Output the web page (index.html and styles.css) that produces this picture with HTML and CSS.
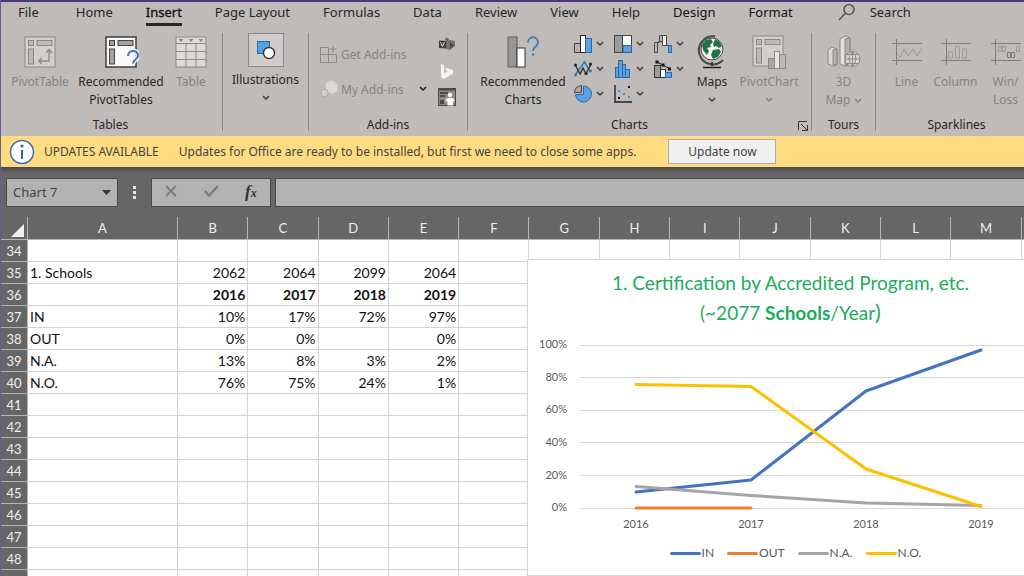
FILE: index.html
```html
<!DOCTYPE html>
<html lang="en">
<head>
<meta charset="utf-8">
<title>Workbook - Schools</title>
<link rel="stylesheet" href="styles.css">
</head>
<body>
<svg class="defs" aria-hidden="true">
  <symbol id="chev" viewBox="0 0 8 6"><path d="M1 1.2L4 4L7 1.2" fill="none" stroke="currentColor" stroke-width="1.6"/></symbol>
</svg>
<div class="app">
<header class="ribbon">
  <nav class="tabs">
    <button class="tab tab-file">File</button>
    <button class="tab">Home</button>
    <button class="tab active">Insert</button>
    <button class="tab">Page Layout</button>
    <button class="tab">Formulas</button>
    <button class="tab">Data</button>
    <button class="tab">Review</button>
    <button class="tab">View</button>
    <button class="tab">Help</button>
    <button class="tab context">Design</button>
    <button class="tab context">Format</button>
    <button class="tab search"><svg width="18" height="18" viewBox="0 0 18 18" fill="none" stroke="#555" stroke-width="1.6"><circle cx="11" cy="6.500" r="5"/><path d="M7.500 10L1 17"/></svg>Search</button>
  </nav>
  <div class="groups">
    <section class="group g-tables">
      <div class="body">
        <button class="big off w70">
          <svg width="32" height="32" viewBox="0 0 32 32"><rect x="1" y="1" width="30" height="30" fill="#d2d0ce" stroke="#8a8886"/><g fill="#bcb9b7" stroke="#8a8886"><rect x="4.500" y="4.500" width="5" height="5"/><rect x="13" y="4.500" width="15" height="5"/><rect x="4.500" y="13" width="5" height="15"/></g><path d="M25 13.500V25H15M22 17l3-3.500 3 3.500M18 22l-3.500 3 3.500 3" fill="none" stroke="#8a8886" stroke-width="1.300"/></svg>
          <span>PivotTable</span>
        </button>
        <button class="big w92">
          <svg width="36" height="32" viewBox="-2 0 36 32"><rect x="1" y="1" width="30" height="30" fill="#f8f8f8" stroke="#333" stroke-width="1.400"/><g fill="#a3a19f" stroke="#444"><rect x="4.500" y="4.500" width="5" height="5"/><rect x="13" y="4.500" width="15" height="5"/><rect x="4.500" y="13" width="5" height="15"/></g><path d="M23 20c0-6.500 10-6.500 10-.500 0 4.500-5 4-5 8" fill="none" stroke="#f8f8f8" stroke-width="5"/><path d="M23 20c0-6.500 10-6.500 10-.500 0 4.500-5 4-5 8" fill="none" stroke="#3a77bd" stroke-width="2"/><circle cx="28" cy="31" r="1.300" fill="#3a77bd"/></svg>
          <span>Recommended<br>PivotTables</span>
        </button>
        <button class="big off w48">
          <svg width="32" height="32" viewBox="0 0 32 32"><rect x="1" y="1" width="30" height="30" fill="#dddbda" stroke="#8a8886"/><path d="M1 7.500H31M1 15.500H31M1 23.500H31M11 7.500V31M21 7.500V31" stroke="#8a8886"/><path d="M3.500 3h5L6 6zM13.500 3h5L16 6zM23.500 3h5L26 6z" fill="#8a8886"/></svg>
          <span>Table</span>
        </button>
      </div>
      <h2>Tables</h2>
    </section>
    <section class="group g-ill">
      <div class="body center">
        <button class="big ill">
          <span class="frame"><svg width="20" height="20" viewBox="0 0 20 20"><rect x="1.500" y="1.500" width="12" height="12" fill="#55a0e0" stroke="#2a6cb0"/><circle cx="13" cy="13" r="5.500" fill="#fff" stroke="#333" stroke-width="1.400"/></svg></span>
          <span>Illustrations</span><svg class="chev" width="8" height="6"><use href="#chev"/></svg>
        </button>
      </div>
    </section>
    <section class="group g-add">
      <div class="body">
        <div class="addins">
          <button class="line off"><svg width="18" height="18" viewBox="0 0 18 18" fill="none" stroke="#8a8886"><path d="M.500 2.500H8.500V17.500H.500zM.500 9.500H16.500V17.500H8.500M13 .500v7M9.500 4h7"/></svg>Get Add-ins</button>
          <button class="line off"><svg width="18" height="18" viewBox="0 0 18 18"><path d="M7 2l6-1.500 4.500 4v6L13 14l-6-2L5.500 6z" fill="#dbd9d8"/><circle cx="4.500" cy="13" r="3.700" fill="#d3d1d0" stroke="#aaa8a6"/></svg>My Add-ins<svg class="chev dark" width="8" height="6"><use href="#chev"/></svg></button>
        </div>
        <div class="apps">
          <button class="mini" aria-label="Visio data"><svg width="18" height="18" viewBox="0 0 18 18"><path d="M1 4.500L8 5v7.500L1 12z" fill="#3d3c3b"/><path d="M8 5l4-1 5 1v5l-5 4-4-1z" fill="#737170"/><path d="M12 6l4 3-4 4z" fill="#4c4a49"/><circle cx="9" cy="3.500" r="1.800" fill="#696765"/><path d="M2.500 6l2 4.500L6.500 6" stroke="#ddd" fill="none"/></svg></button>
          <button class="mini" aria-label="Bing maps"><svg width="18" height="18" viewBox="0 0 18 18"><path d="M3 2l3 1v8.500l4-2-2-1-1.200-3L15 8v3.500L6 17l-3-2z" fill="#f3f3f3"/></svg></button>
          <button class="mini" aria-label="People graph"><svg width="18" height="18" viewBox="0 0 18 18"><rect x=".500" y=".500" width="17" height="17" fill="#8c8a88" stroke="#4a4948"/><path d="M0 1.500h18M2 5h8M2 8h5" stroke="#4a4948" stroke-width="2"/><path d="M2 16v-4h4v4z" fill="#4a4948"/><circle cx="12" cy="7" r="2.200" fill="#fff"/><path d="M7.500 13q0-3 3-3h3q3 0 3 3l-1.500 1v3.500H9.500V14z" fill="#fff"/></svg></button>
        </div>
      </div>
      <h2>Add-ins</h2>
    </section>
    <section class="group g-charts">
      <div class="body">
        <button class="big w92 rec">
          <svg width="32" height="32" viewBox="0 0 32 32"><rect x="1" y="1" width="9" height="30" fill="#989694" stroke="#5d5c5a"/><rect x="10" y="12" width="8" height="19" fill="#fff" stroke="#333"/><path d="M21 6.500c0-7 10-7 10 0 0 4.500-5 4-5 8.500" fill="none" stroke="#3a77bd" stroke-width="1.800"/><circle cx="26" cy="18.500" r="1.300" fill="#3a77bd"/></svg>
          <span>Recommended<br>Charts</span>
        </button>
        <div class="chartgrid">
          <button class="pick" aria-label="Column chart"><svg width="18" height="18" viewBox="0 0 18 18"><rect x=".500" y="8.500" width="6" height="9" fill="#b3b1af" stroke="#444"/><rect x="6.500" y=".500" width="5" height="17" fill="#fff" stroke="#222"/><rect x="11.500" y="3.500" width="6" height="14" fill="#5aa3e0" stroke="#2766a8"/></svg><svg class="chev" width="8" height="6"><use href="#chev"/></svg></button>
          <button class="pick" aria-label="Hierarchy chart"><svg width="18" height="18" viewBox="0 0 18 18"><rect x=".500" y=".500" width="17" height="17" fill="#fff" stroke="#444"/><rect x="1" y="1" width="7.500" height="16" fill="#9f9d9b"/><rect x="9" y="10.500" width="8.500" height="7" fill="#5aa3e0" stroke="#2766a8"/><path d="M8.500 1v16" stroke="#444"/></svg><svg class="chev" width="8" height="6"><use href="#chev"/></svg></button>
          <button class="pick" aria-label="Waterfall chart"><svg width="18" height="18" viewBox="0 0 18 18" fill="none" stroke="#444"><path d="M.500 17.500v-10h3v10zM3.500 7.500h2v-7h3v6h-3z"/><path d="M8.500.500h4v10h-4z" fill="#f5f5f5"/><rect x="14.500" y="10.500" width="3" height="7" fill="#5aa3e0" stroke="#2766c0"/><path d="M12.500 10.500h2"/></svg><svg class="chev" width="8" height="6"><use href="#chev"/></svg></button>
          <button class="pick" aria-label="Line chart"><svg width="18" height="18" viewBox="0 0 18 18" fill="none"><path d="M1 15L10.500 2l6 10" stroke="#3a77bd" stroke-width="1.500"/><path d="M1 4.500L6 14l3-6 3 6L17 4" stroke="#333" stroke-width="1.400"/><g fill="#222"><circle cx="1.500" cy="5" r="1.500"/><circle cx="16.500" cy="4" r="1.500"/><circle cx="12" cy="13.500" r="1.500"/></g><g fill="#3a77bd"><circle cx="1.500" cy="15" r="1.500"/><circle cx="10.500" cy="2.500" r="1.500"/><circle cx="16.500" cy="11" r="1.500"/></g></svg><svg class="chev" width="8" height="6"><use href="#chev"/></svg></button>
          <button class="pick" aria-label="Statistic chart"><svg width="18" height="18" viewBox="0 0 18 18"><g fill="#5aa3e0" stroke="#2766a8"><rect x="1.500" y="7.500" width="3" height="10"/><rect x="4.500" y=".500" width="4" height="17"/><rect x="8.500" y="4.500" width="3" height="13"/><rect x="11.500" y="9.500" width="4" height="8"/></g></svg><svg class="chev" width="8" height="6"><use href="#chev"/></svg></button>
          <button class="pick" aria-label="Combo chart"><svg width="18" height="18" viewBox="0 0 18 18"><rect x=".500" y="5.500" width="6" height="12" fill="#9f9d9b" stroke="#333"/><rect x="6.500" y="9.500" width="5" height="8" fill="#fff" stroke="#333"/><rect x="11.500" y="12.500" width="6" height="5" fill="#5aa3e0" stroke="#2766c0"/><path d="M3 2l6 3 7 4" stroke="#111" fill="none"/><path d="M1.500.500h3v3h-3zM7.500 3.500h3v3h-3zM14 7.500h3v3h-3z" fill="#111"/></svg><svg class="chev" width="8" height="6"><use href="#chev"/></svg></button>
          <button class="pick" aria-label="Pie chart"><svg width="18" height="18" viewBox="0 0 18 18"><path d="M9.500 1a8 8 0 1 1-8 8.500h8z" fill="#5aa3e0" stroke="#2766a8"/><path d="M7.500.500v7H.500Q.500 1.500 7.500.500z" fill="#aaa8a6" stroke="#444"/></svg><svg class="chev" width="8" height="6"><use href="#chev"/></svg></button>
          <button class="pick" aria-label="Scatter chart"><svg width="18" height="18" viewBox="0 0 18 18"><path d="M1 0v17h17" fill="none" stroke="#222" stroke-width="1.400"/><path d="M4 12h2v2H4zM14 1h2v2h-2z" fill="#111"/><path d="M4 5h2v2H4zM9 8h2v2H9zM14 11h2v2h-2z" fill="#3a8fd8"/></svg><svg class="chev" width="8" height="6"><use href="#chev"/></svg></button>
        </div>
        <button class="big w48">
          <svg width="30" height="34" viewBox="0 0 30 34"><path d="M18 1.500A14 14 0 1 0 26 25" fill="none" stroke="#4a4948" stroke-width="2"/><circle cx="15" cy="14" r="11" fill="#f7f7f7" stroke="#444"/><path d="M5 10l4-5 5-1 2 3-3 3 1 2-4 1 2 3-2 4-4-5zM18 4l4 2 3 5-3 2-3-2-2 1-1-3zM16 15l6-1 2 3-3 5-5 2-2-4z" fill="#217346"/><path d="M15 27v4M6 32.500h18" stroke="#222" stroke-width="1.500"/></svg>
          <span>Maps</span><svg class="chev" width="8" height="6"><use href="#chev"/></svg>
        </button>
        <button class="big off w66">
          <svg width="34" height="34" viewBox="0 0 34 34"><rect x="1" y="1" width="30" height="30" fill="#d2d0ce" stroke="#8a8886"/><g fill="#bcb9b7" stroke="#8a8886"><rect x="4.500" y="4.500" width="5" height="5"/><rect x="13" y="4.500" width="15" height="5"/><rect x="4.500" y="13" width="5" height="15"/></g><g stroke="#8a8886"><rect x="16.500" y="23.500" width="6" height="10" fill="#aaa8a6"/><rect x="22.500" y="16.500" width="5" height="17" fill="#e6e5e4"/><rect x="27.500" y="19.500" width="6" height="14" fill="#bcb9b7"/></g></svg>
          <span>PivotChart</span><svg class="chev" width="8" height="6"><use href="#chev"/></svg>
        </button>
      </div>
      <h2>Charts</h2>
      <button class="launcher" aria-label="Chart options"><svg width="10" height="10" viewBox="0 0 10 10" fill="none" stroke="#333"><path d="M.500 9V.500H9M3 3l6 6M9.500 4v5.500H4"/></svg></button>
    </section>
    <section class="group g-tours">
      <div class="body center">
        <button class="big off">
          <svg width="34" height="34" viewBox="0 0 34 34"><g stroke="#8a8886"><path d="M1 15l4-3 5 2v16l-4 1-5-2z" fill="#d9d7d6"/><path d="M6 15v15l4-1V14z" fill="#b3b1af"/><path d="M13 4l5-3 5 2v27l-5 1-5-2z" fill="#e4e2e1"/><path d="M18 4v26l5-1V3z" fill="#b3b1af"/><circle cx="25.500" cy="24" r="7.500" fill="#dbd9d8"/><path d="M18 24h15M20 19.500h11M20 28.500h11M25.500 16.500v15M25.500 16.500q-7 7.500 0 15M25.500 16.500q7 7.500 0 15" fill="none"/></g></svg>
          <span>3D<br>Map <svg width="8" height="6"><use href="#chev"/></svg></span>
        </button>
      </div>
      <h2>Tours</h2>
    </section>
    <section class="group g-spark">
      <div class="body center">
        <button class="big off w48">
          <svg width="32" height="32" viewBox="0 0 32 32" fill="none" stroke="#7d7b79"><path d="M1 7.500h30M1 24.500h30M5.500 3v26"/><path d="M6 17l3 4 4-8 4 7 5-7 4 7 5-8" stroke="#9a9896"/></svg>
          <span>Line</span>
        </button>
        <button class="big off w50">
          <svg width="32" height="32" viewBox="0 0 32 32" fill="none" stroke="#7d7b79"><path d="M1 7.500h30M1 24.500h30M6.500 3v26"/><path d="M8.500 22v-6h4v6zM15.500 22V10.500h4V22zM22.500 22v-9h4v9z" stroke="#9a9896"/></svg>
          <span>Column</span>
        </button>
        <button class="big off w50">
          <svg width="32" height="32" viewBox="0 0 32 32" fill="none" stroke="#7d7b79"><path d="M1 7.500h30M1 24.500h30M5.500 3v26"/><path d="M8.500 10.500h3v5h-3zM12.500 10.500h3v5h-3zM26.500 10.500h3v5h-3z" stroke="#9a9896"/><path d="M17.500 16.500h3v5h-3zM21.500 16.500h3v5h-3z"/></svg>
          <span>Win/<br>Loss</span>
        </button>
      </div>
      <h2>Sparklines</h2>
    </section>
  </div>
</header>

<div class="notice" role="status">
  <svg width="26" height="26" viewBox="0 0 26 26"><circle cx="13" cy="13" r="11.500" fill="#fff" stroke="#3f6fb0" stroke-width="1.500"/><path d="M13 11v9" stroke="#2a62ad" stroke-width="2"/><circle cx="13" cy="7" r="1.500" fill="#2a62ad"/></svg>
  <strong>UPDATES AVAILABLE</strong>
  <p>Updates for Office are ready to be installed, but first we need to close some apps.</p>
  <button>Update now</button>
</div>

<div class="formula">
  <button class="namebox">Chart 7<svg width="9" height="5" viewBox="0 0 9 5"><path d="M0 0h9L4.500 5z" fill="#333"/></svg></button>
  <svg class="dots" width="3" height="13" viewBox="0 0 3 13"><path d="M0 0h3v3H0zM0 5h3v3H0zM0 10h3v3H0z" fill="#e6e6e6"/></svg>
  <div class="fx">
    <button aria-label="Cancel"><svg width="12" height="12" viewBox="0 0 12 12"><path d="M1 1l10 10M11 1L1 11" stroke="#7c7c7c" stroke-width="2"/></svg></button>
    <button aria-label="Enter"><svg width="15" height="12" viewBox="0 0 15 12"><path d="M1 6l4 4.500L14 1" fill="none" stroke="#7c7c7c" stroke-width="2.500"/></svg></button>
    <button class="fn" aria-label="Insert function"><i>f</i><small>x</small></button>
  </div>
  <input type="text" class="finput" aria-label="Formula bar">
</div>

<main class="sheet">
  <table>
    <colgroup><col class="c-num"><col class="c-a"><col span="13"></colgroup>
    <thead><tr><th class="corner"><svg width="13" height="13" viewBox="0 0 13 13"><path d="M13 0v13H0z" fill="#f0f0f0"/></svg></th><th>A</th><th>B</th><th>C</th><th>D</th><th>E</th><th>F</th><th>G</th><th>H</th><th>I</th><th>J</th><th>K</th><th>L</th><th>M</th><th></th></tr></thead>
    <tbody>
      <tr><th>34</th><td></td><td></td><td></td><td></td><td></td><td></td><td></td><td></td><td></td><td></td><td></td><td></td><td></td><td></td></tr>
      <tr><th>35</th><td>1. Schools</td><td>2062</td><td>2064</td><td>2099</td><td>2064</td><td></td><td></td><td></td><td></td><td></td><td></td><td></td><td></td><td></td></tr>
      <tr class="years"><th>36</th><td></td><td>2016</td><td>2017</td><td>2018</td><td>2019</td><td></td><td></td><td></td><td></td><td></td><td></td><td></td><td></td><td></td></tr>
      <tr><th>37</th><td>IN</td><td>10%</td><td>17%</td><td>72%</td><td>97%</td><td></td><td></td><td></td><td></td><td></td><td></td><td></td><td></td><td></td></tr>
      <tr><th>38</th><td>OUT</td><td>0%</td><td>0%</td><td></td><td>0%</td><td></td><td></td><td></td><td></td><td></td><td></td><td></td><td></td><td></td></tr>
      <tr><th>39</th><td>N.A.</td><td>13%</td><td>8%</td><td>3%</td><td>2%</td><td></td><td></td><td></td><td></td><td></td><td></td><td></td><td></td><td></td></tr>
      <tr><th>40</th><td>N.O.</td><td>76%</td><td>75%</td><td>24%</td><td>1%</td><td></td><td></td><td></td><td></td><td></td><td></td><td></td><td></td><td></td></tr>
      <tr><th>41</th><td></td><td></td><td></td><td></td><td></td><td></td><td></td><td></td><td></td><td></td><td></td><td></td><td></td><td></td></tr>
      <tr><th>42</th><td></td><td></td><td></td><td></td><td></td><td></td><td></td><td></td><td></td><td></td><td></td><td></td><td></td><td></td></tr>
      <tr><th>43</th><td></td><td></td><td></td><td></td><td></td><td></td><td></td><td></td><td></td><td></td><td></td><td></td><td></td><td></td></tr>
      <tr><th>44</th><td></td><td></td><td></td><td></td><td></td><td></td><td></td><td></td><td></td><td></td><td></td><td></td><td></td><td></td></tr>
      <tr><th>45</th><td></td><td></td><td></td><td></td><td></td><td></td><td></td><td></td><td></td><td></td><td></td><td></td><td></td><td></td></tr>
      <tr><th>46</th><td></td><td></td><td></td><td></td><td></td><td></td><td></td><td></td><td></td><td></td><td></td><td></td><td></td><td></td></tr>
      <tr><th>47</th><td></td><td></td><td></td><td></td><td></td><td></td><td></td><td></td><td></td><td></td><td></td><td></td><td></td><td></td></tr>
      <tr><th>48</th><td></td><td></td><td></td><td></td><td></td><td></td><td></td><td></td><td></td><td></td><td></td><td></td><td></td><td></td></tr>
      <tr><th></th><td></td><td></td><td></td><td></td><td></td><td></td><td></td><td></td><td></td><td></td><td></td><td></td><td></td><td></td></tr>
    </tbody>
  </table>
  <figure class="chart">
    <figcaption>1. Certification by Accredited Program, etc.<br>(~2077 <b>Schools</b>/Year<span class="paren">)</span></figcaption>
    <svg class="plot" width="518" height="206" viewBox="0 0 518 206">
      <path d="M52 16.500H518M52 48.500H518M52 81.500H518M52 113.500H518M52 146.500H518M52 179.500H518" stroke="#d9d9d9"/>
      <g text-anchor="end"><text x="39" y="19">100%</text><text x="39" y="52">80%</text><text x="39" y="84">60%</text><text x="39" y="117">40%</text><text x="39" y="150">20%</text><text x="39" y="182">0%</text></g>
      <g text-anchor="middle"><text x="108" y="199">2016</text><text x="223" y="199">2017</text><text x="338" y="199">2018</text><text x="453" y="199">2019</text></g>
      <g fill="none" stroke-width="3" stroke-linecap="round" stroke-linejoin="round">
        <path d="M108 163L223 151L338 62L453 21" stroke="#4472c4"/>
        <path d="M108 179H223" stroke="#ed7d31"/>
        <path d="M108 157.500L223 166.500L338 174L453 176.500" stroke="#a5a5a5"/>
        <path d="M108 55.500L223 57.500L338 140L453 177.500" stroke="#ffc000"/>
      </g>
    </svg>
    <ul class="legend"><li class="in">IN</li><li class="out">OUT</li><li class="na">N.A.</li><li class="no">N.O.</li></ul>
  </figure>
</main>
</div>
</body>
</html>
```
FILE: styles.css
```css
* { box-sizing: border-box; }
body { margin: 0; background: #666; font-family: "Noto Sans", "Open Sans", sans-serif; font-size: 12px; color: #262626; overflow: hidden; }
button { font: inherit; color: inherit; background: none; border: 0; padding: 0; margin: 0; }
.defs { position: absolute; width: 0; height: 0; }
.app { display: flex; flex-direction: column; height: 100vh; border-left: 1px solid #6b5a8c; overflow: hidden; }

.ribbon { flex: none; background: #bfbbb8; border-top: 2px solid #4b3585; overflow: hidden; }
.tabs { display: flex; height: 28px; padding-left: 1px; }
.tab { flex: none; height: 24px; margin: 0 17px 0 16px; padding-bottom: 2px; font-size: 13px; line-height: 20px; white-space: nowrap; border-bottom: 3px solid transparent; }
.tab-file { margin-right: 21px; }
.tab.active { border-color: #262626; color: #111; -webkit-text-stroke: 0.3px #111; }
.tab.context { color: #111; }
.tab.search { display: flex; gap: 14px; margin-left: 28px; }
.tab.search svg { margin-top: 1px; }

.groups { display: flex; padding: 3px 0; height: 106px; overflow: hidden; }
.group { position: relative; flex: none; display: flex; flex-direction: column; height: 98px; border-right: 1px solid #8a8785; }
.group h2 { margin: 0; height: 12px; font-size: 12px; font-weight: 400; line-height: 12px; text-align: center; }
.body { display: flex; height: 86px; padding-top: 2px; }
.center { justify-content: center; }
.big { display: flex; flex-direction: column; align-items: center; line-height: 18px; white-space: nowrap; }
.big > svg { height: 34px; }
.big > span { margin-top: 4px; }
.big > .chev { height: 6px; margin-top: 6px; }
.off { color: #858280; }
.w48 { width: 48px; }
.w50 { width: 50px; }
.w66 { width: 66px; }
.w70 { width: 70px; }
.w92 { width: 92px; }
.g-tables { width: 222px; padding-left: 4px; }
.g-tables h2 { margin-right: 6px; }
.g-ill { width: 86px; }
.g-ill .body { padding: 0; }
.ill .frame { display: flex; align-items: center; justify-content: center; width: 36px; height: 34px; margin: 0; background: #cfcdcc; border: 1px solid #8a8785; }
.g-add { width: 159px; }
.addins { display: flex; flex-direction: column; gap: 17px; width: 129px; padding: 10px 0 0 11px; }
.line { display: flex; align-items: center; gap: 3px; height: 18px; white-space: nowrap; }
.line .chev { margin-left: 12px; }
.chev { color: #444; }
.off .chev { color: #858280; }
.off .chev.dark { color: #262626; }
.apps { display: flex; flex-direction: column; gap: 8px; padding-top: 1px; }
.mini { height: 18px; }
.mini svg { display: block; }
.g-charts { width: 344px; }
.g-charts h2 { margin-right: 20px; }
.rec { margin-left: 9px; }
.chartgrid { display: grid; grid-template-columns: repeat(3, 40px); grid-auto-rows: 25px; width: 114px; margin-left: 5px; }
.pick { display: flex; align-items: center; gap: 4px; width: 30px; height: 18px; }
.launcher { position: absolute; right: 3px; bottom: 0; height: 10px; }
.launcher svg { display: block; }
.g-tours { width: 64px; }
.g-spark { width: 162px; }

.notice { flex: none; display: flex; align-items: center; height: 31px; padding-left: 8px; background: #ffdc81; color: #444; }
.notice strong { margin-left: 9px; font-weight: 400; }
.notice p { margin: 0 0 0 20px; }
.notice button { width: 108px; height: 25px; margin-left: 32px; background: #efefef; border: 1px solid #ababab; }

.formula { flex: none; display: flex; align-items: center; height: 50px; padding: 0 0 0 5px; background: linear-gradient(#4c4a48, #666 6px); }
.namebox, .fx, .finput { height: 29px; background: #b2b2b2; border: 1px solid #4a4a4a; border-radius: 0; }
.namebox { display: flex; align-items: center; justify-content: space-between; width: 112px; padding: 0 6px; color: #444; font-size: 13px; }
.dots { margin: 0 15px; }
.fx { display: flex; align-items: center; justify-content: space-around; width: 120px; }
.fn { font-family: "Liberation Serif", serif; font-size: 17px; font-weight: 700; line-height: 20px; color: #333; }
.fn small { font-size: 12px; font-style: italic; }
.finput { flex: 1; min-width: 0; margin-left: 4px; border-right: 0; }

.sheet { position: relative; flex: 1; min-height: 0; overflow: hidden; background: #fff; font-family: Lato, sans-serif; }
table { width: calc(100% + 68px); table-layout: fixed; border-collapse: separate; border-spacing: 0; font-size: 14px; color: #111; }
.c-num { width: 27px; }
.c-a { width: 150px; }
th { height: 22px; padding: 0; background: #666; color: #f0f0f0; font-size: 13px; font-weight: 400; border-right: 1px solid #b5b5b5; border-bottom: 1px solid #b5b5b5; }
thead th { height: 23px; }
.corner svg { display: block; margin-left: 10px; margin-top: 4px; }
td { height: 22px; padding: 0 2px; line-height: 18px; text-align: right; white-space: nowrap; border-right: 1px solid #d4d4d4; border-bottom: 1px solid #d4d4d4; }
td:nth-child(2) { text-align: left; }
.years td { font-weight: 700; }

.chart { position: absolute; left: 526px; top: 42px; right: -30px; height: 317px; margin: 0; overflow: hidden; background: #fff; border: 1px solid #d4d4d4; color: #595959; }
figcaption { padding: 8px 0 1px; color: #1aae5a; font-size: 19px; line-height: 30px; text-align: center; }
.paren { font-size: 22px; line-height: 20px; }
.plot { display: block; font-size: 11px; fill: #595959; }
.legend { display: flex; justify-content: center; gap: 13px; margin: 10px 0 0; padding: 0 0 0 10px; list-style: none; font-size: 12px; line-height: 16px; }
.legend li { display: flex; align-items: center; gap: 1px; }
.legend li::before { content: ""; width: 31px; height: 3px; border-radius: 2px; background: currentColor; }
.in::before { color: #4472c4; }
.out::before { color: #ed7d31; }
.na::before { color: #a5a5a5; }
.no::before { color: #ffc000; }
```
